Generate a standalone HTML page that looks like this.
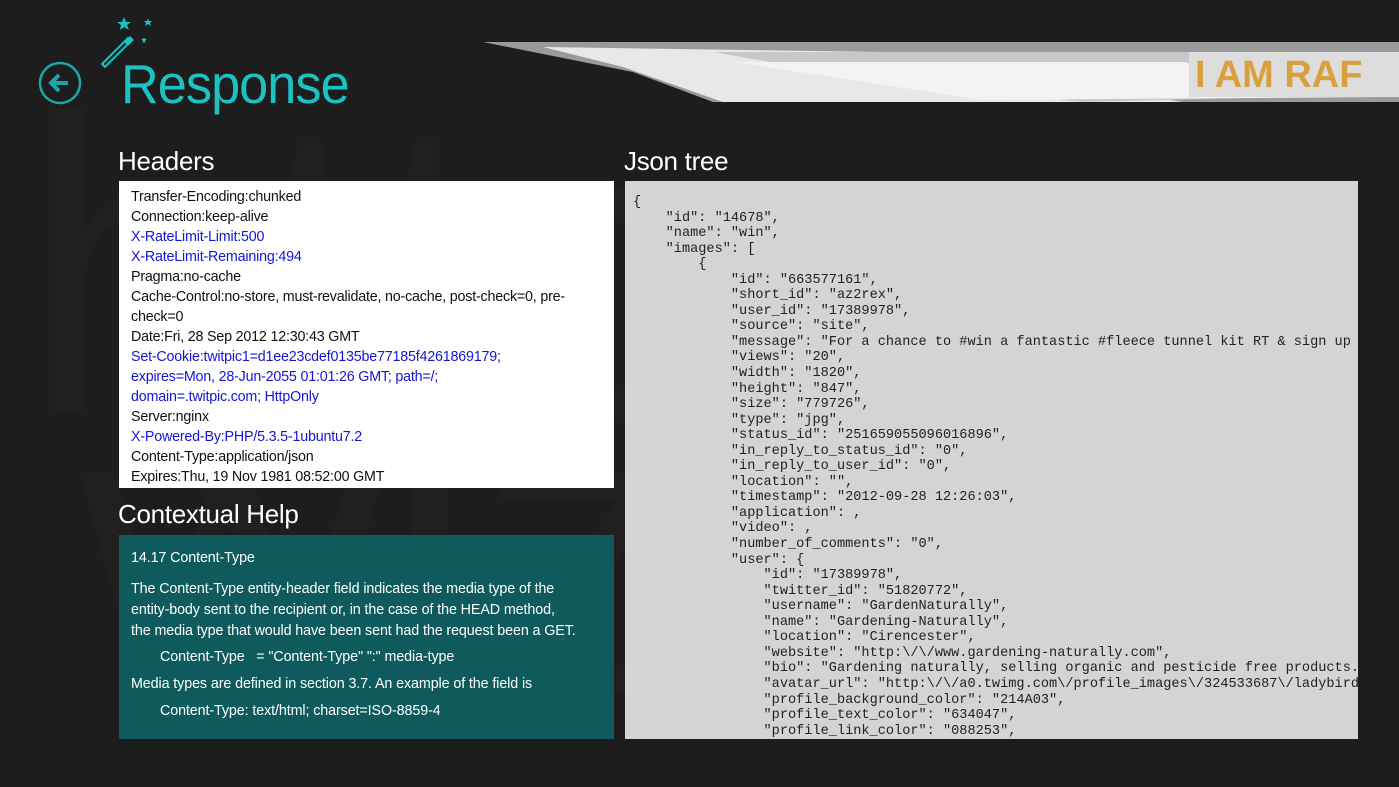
<!DOCTYPE html>
<html><head><meta charset="utf-8"><style>
body{margin:0;width:1399px;height:787px;background:#1d1d1d;overflow:hidden;position:relative;font-family:"Liberation Sans",sans-serif}
.a{position:absolute}
.bg{color:#221f1f;font-size:420px;line-height:1;font-weight:300}
h1{position:absolute;left:121px;top:52px;margin:0;font-weight:normal;font-size:55px;color:#1cc2c2;letter-spacing:-1px;transform:scaleX(0.95);transform-origin:left}
.h2{position:absolute;color:#fff;font-size:26px;letter-spacing:-0.3px}
#hdr{left:119px;top:181px;width:495px;height:307px;background:#fff;overflow:hidden;font-size:14.3px;line-height:20px;color:#111;letter-spacing:-0.2px}
#hdr div{padding:6px 12px}
.b{color:#1515d8}
#help{left:119px;top:535px;width:495px;height:204px;background:#0e5a5d;color:#fff;font-size:14.3px;line-height:22px;letter-spacing:-0.1px}
#json{left:625px;top:181px;width:733px;height:558px;background:#d4d4d4;overflow:hidden}
#json pre{margin:0;padding:14px 0 0 8px;font-family:"Liberation Mono",monospace;font-size:13.6px;line-height:15.55px;color:#222;white-space:pre}
</style></head><body>
<div class="a bg" style="left:20px;top:60px">http</div>
<div class="a bg" style="left:80px;top:340px">wiz</div>
<svg class="a" style="left:38px;top:61px" width="46" height="46"><circle cx="22" cy="22" r="20" fill="none" stroke="#1aa7a7" stroke-width="2.5"/><path d="M30 22H14M21 14l-8 8 8 8" fill="none" stroke="#1aa7a7" stroke-width="4"/></svg>
<svg class="a" style="left:98px;top:14px" width="60" height="54"><path d="M4 50L30 24l3 3L7 53z" fill="none" stroke="#1cc2c2" stroke-width="2"/><path d="M26 28l6-6 4 4-6 6z" fill="#1cc2c2"/><path d="M26 3l2 5 5 0-4 3 2 5-5-3-4 3 1-5-4-3 5 0z" fill="#1cc2c2"/><path d="M50 4l1 3 3 0-2 2 1 3-3-2-3 2 1-3-2-2 3 0z" fill="#1cc2c2"/><path d="M46 23l1 2 2 0-2 2 1 2-2-1-2 1 1-2-2-2 2 0z" fill="#1cc2c2"/></svg>
<h1>Response</h1>
<svg class="a" style="left:483px;top:42px" width="916" height="60"><polygon points="0,0 916,0 916,60 230,60 150,30 0,0" fill="#9a9a9a"/><polygon points="60,5 400,10 700,60 240,60 140,25" fill="#e8e8e8"/><polygon points="230,10 916,10 916,52 600,60 400,40" fill="#c8c8c8"/><polygon points="250,20 700,20 900,55 500,58" fill="#f3f3f3"/><rect x="706" y="10" width="210" height="45" fill="#ddd"/><text x="712" y="45" font-size="38" font-weight="bold" fill="#d9a040" font-family="Liberation Sans">I AM RAF</text></svg>
<div class="h2" style="left:118px;top:146px">Headers</div>
<div class="h2" style="left:624px;top:146px">Json tree</div>
<div class="h2" style="left:118px;top:499px">Contextual Help</div>
<div id="hdr" class="a"><div>Transfer-Encoding:chunked<br>Connection:keep-alive<br><span class="b">X-RateLimit-Limit:500<br>X-RateLimit-Remaining:494</span><br>Pragma:no-cache<br>Cache-Control:no-store, must-revalidate, no-cache, post-check=0, pre-<br>check=0<br>Date:Fri, 28 Sep 2012 12:30:43 GMT<br><span class="b">Set-Cookie:twitpic1=d1ee23cdef0135be77185f4261869179;<br>expires=Mon, 28-Jun-2055 01:01:26 GMT; path=/;<br>domain=.twitpic.com; HttpOnly</span><br>Server:nginx<br><span class="b">X-Powered-By:PHP/5.3.5-1ubuntu7.2</span><br>Content-Type:application/json<br>Expires:Thu, 19 Nov 1981 08:52:00 GMT</div></div>
<div id="help" class="a"><div style="padding:12px 12px">
<div>14.17 Content-Type</div>
<div style="margin-top:10px;line-height:21px">The Content-Type entity-header field indicates the media type of the<br>entity-body sent to the recipient or, in the case of the HEAD method,<br>the media type that would have been sent had the request been a GET.</div>
<div style="margin-top:4px;padding-left:29px">Content-Type&nbsp;&nbsp;&nbsp;= "Content-Type" ":" media-type</div>
<div style="margin-top:5px">Media types are defined in section 3.7. An example of the field is</div>
<div style="margin-top:5px;padding-left:29px">Content-Type: text/html; charset=ISO-8859-4</div>
</div></div>
<div id="json" class="a"><pre>{
    "id": "14678",
    "name": "win",
    "images": [
        {
            "id": "663577161",
            "short_id": "az2rex",
            "user_id": "17389978",
            "source": "site",
            "message": "For a chance to #win a fantastic #fleece tunnel kit RT &amp; sign up to our newsletter",
            "views": "20",
            "width": "1820",
            "height": "847",
            "size": "779726",
            "type": "jpg",
            "status_id": "251659055096016896",
            "in_reply_to_status_id": "0",
            "in_reply_to_user_id": "0",
            "location": "",
            "timestamp": "2012-09-28 12:26:03",
            "application": ,
            "video": ,
            "number_of_comments": "0",
            "user": {
                "id": "17389978",
                "twitter_id": "51820772",
                "username": "GardenNaturally",
                "name": "Gardening-Naturally",
                "location": "Cirencester",
                "website": "http:\/\/www.gardening-naturally.com",
                "bio": "Gardening naturally, selling organic and pesticide free products.",
                "avatar_url": "http:\/\/a0.twimg.com\/profile_images\/324533687\/ladybird.jpg",
                "profile_background_color": "214A03",
                "profile_text_color": "634047",
                "profile_link_color": "088253",
</pre></div>
</body></html>
